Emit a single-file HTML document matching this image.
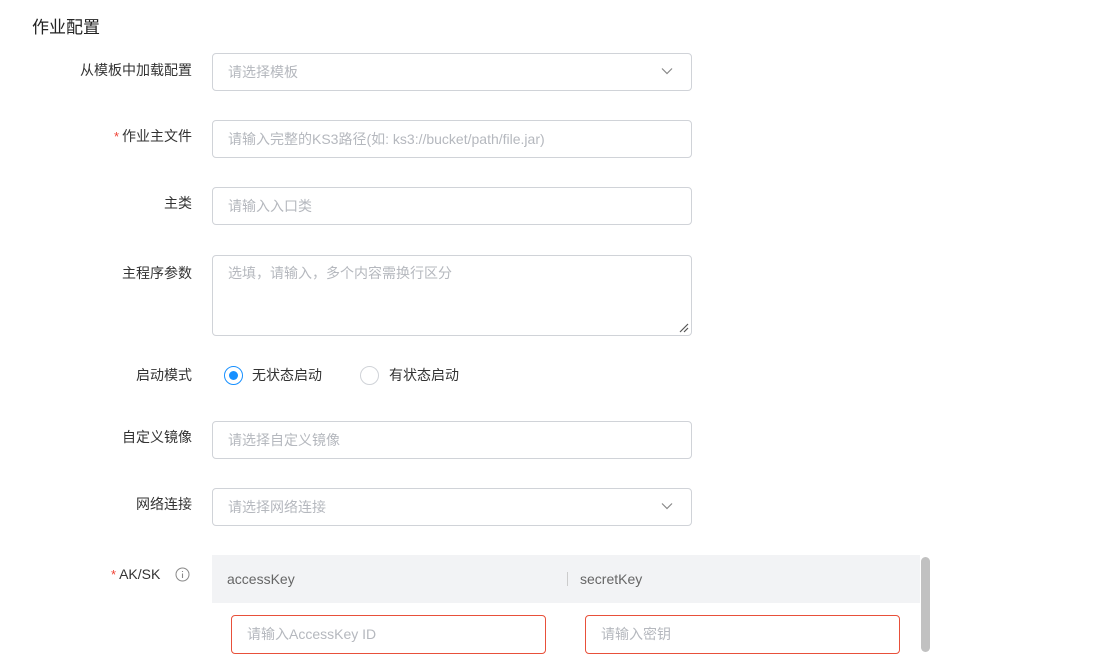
<!DOCTYPE html>
<html><head><meta charset="utf-8"><style>
*{box-sizing:border-box;margin:0;padding:0}
body{width:1110px;height:659px;background:#fff;font-family:"Liberation Sans","Noto Sans CJK SC",sans-serif;position:relative;overflow:hidden;color:#333}
.a{position:absolute}
.lbl{position:absolute;right:918px;font-size:14px;color:#333;line-height:18px;white-space:nowrap}
.star{color:#f04134;margin-right:3px;font-size:13px}
.in{position:absolute;left:212px;width:480px;height:38px;border:1px solid #d0d3d8;border-radius:4px;font-size:14px;color:#b5b8be;padding-left:15px;line-height:36px}
.chev{position:absolute;right:18px;top:13px}
.ph{color:#b5b8be;font-size:14px}
</style></head><body>
<div class="a" style="left:32px;top:13px;font-size:17px;color:#222">作业配置</div>

<div class="lbl" style="top:61px">从模板中加载配置</div>
<div class="in" style="top:53px">请选择模板<svg class="chev" width="12" height="8" viewBox="0 0 12 8"><path d="M1 1.5L6 6.5L11 1.5" fill="none" stroke="#888" stroke-width="1.2"/></svg></div>

<div class="lbl" style="top:127px"><span class="star">*</span>作业主文件</div>
<div class="in" style="top:120px">请输入完整的KS3路径(如: ks3://bucket/path/file.jar)</div>

<div class="lbl" style="top:194px">主类</div>
<div class="in" style="top:187px">请输入入口类</div>

<div class="lbl" style="top:264px">主程序参数</div>
<div class="in" style="top:255px;height:81px;line-height:20px;padding-top:7px">选填，请输入，多个内容需换行区分
<svg class="a" style="right:2px;bottom:2px" width="10" height="10" viewBox="0 0 10 10"><path d="M1 9L9 1M5 9L9 5" stroke="#555" stroke-width="1.2"/></svg></div>

<div class="lbl" style="top:366px">启动模式</div>
<div class="a" style="left:224px;top:366px;width:19px;height:19px;border:1px solid #1890ff;border-radius:50%"><div class="a" style="left:4px;top:4px;width:9px;height:9px;background:#1890ff;border-radius:50%"></div></div>
<div class="a" style="left:252px;top:366px;font-size:14px;line-height:18px">无状态启动</div>
<div class="a" style="left:360px;top:366px;width:19px;height:19px;border:1px solid #d0d3d8;border-radius:50%"></div>
<div class="a" style="left:389px;top:366px;font-size:14px;line-height:18px">有状态启动</div>

<div class="lbl" style="top:428px">自定义镜像</div>
<div class="in" style="top:421px">请选择自定义镜像</div>

<div class="lbl" style="top:495px">网络连接</div>
<div class="in" style="top:488px">请选择网络连接<svg class="chev" width="12" height="8" viewBox="0 0 12 8"><path d="M1 1.5L6 6.5L11 1.5" fill="none" stroke="#888" stroke-width="1.2"/></svg></div>

<div class="a" style="left:111px;top:565px;font-size:14px;line-height:18px;white-space:nowrap"><span class="star">*</span>AK/SK</div>
<svg class="a" style="left:175px;top:567px" width="15" height="15" viewBox="0 0 15 15"><circle cx="7.5" cy="7.5" r="6.5" fill="none" stroke="#888" stroke-width="1"/><path d="M7.5 6.5V11M7.5 4V5" stroke="#888" stroke-width="1.1"/></svg>

<div class="a" style="left:212px;top:555px;width:708px;height:48px;background:#f2f3f5"></div>
<div class="a" style="left:227px;top:570px;font-size:14px;color:#666;line-height:18px">accessKey</div>
<div class="a" style="left:567px;top:572px;width:1px;height:14px;background:#ccc"></div>
<div class="a" style="left:580px;top:570px;font-size:14px;color:#666;line-height:18px">secretKey</div>
<div class="a" style="left:921px;top:557px;width:9px;height:95px;background:#c1c1c1;border-radius:5px"></div>

<div class="a" style="left:231px;top:615px;width:315px;height:39px;border:1px solid #e8503a;border-radius:4px;padding-left:15px;line-height:37px"><span class="ph">请输入AccessKey ID</span></div>
<div class="a" style="left:585px;top:615px;width:315px;height:39px;border:1px solid #e8503a;border-radius:4px;padding-left:15px;line-height:37px"><span class="ph">请输入密钥</span></div>
</body></html>
